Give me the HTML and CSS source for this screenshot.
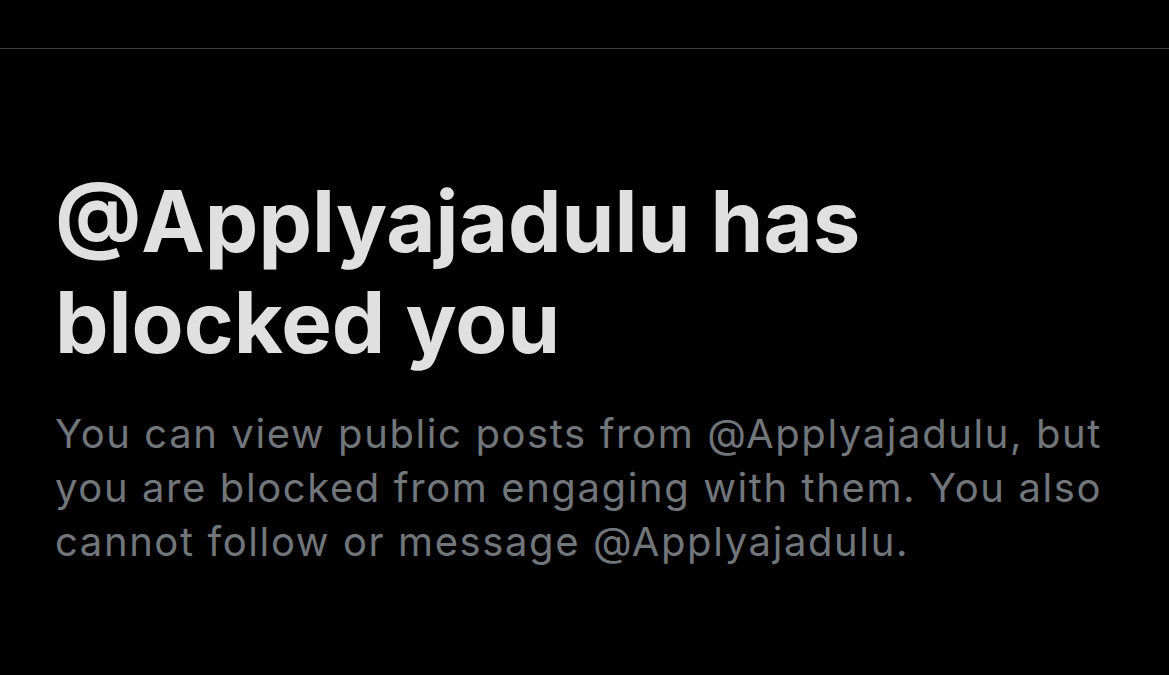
FILE: index.html
```html
<!DOCTYPE html>
<html lang="en">
<head>
  <meta charset="UTF-8" />
  <meta name="viewport" content="width=device-width, initial-scale=1.0"/>
  <title>Blocked</title>
  <link rel="stylesheet" href="styles.css">
</head>
<body>
  <div class="top-bar"></div>
  <div class="blocked">
    <h1 class="blocked-title">@Applyajadulu has blocked you</h1>
    <p class="blocked-text">You can view public posts from @Applyajadulu, but you are blocked from engaging with them. You also cannot follow or message @Applyajadulu.</p>
  </div>
</body>
</html>
```

FILE: styles.css
```css
html, body {
  margin: 0;
  background: #000;
}
body {
  font-family: Inter, 'Noto Sans', sans-serif;
  overflow: hidden;
}
.top-bar {
  height: 48px;
  border-bottom: 1px solid #3a3a3a;
}
.blocked {
  padding: 122px 40px 0 55px;
}
.blocked-title {
  margin: 0;
  font-size: 85px;
  font-weight: 700;
  line-height: 101px;
  color: #e0e0e0;
  max-width: 900px;
}
.blocked-text {
  margin: 34px 0 0;
  font-size: 40px;
  line-height: 54px;
  letter-spacing: 1.6px;
  color: #71767b;
  max-width: 1075px;
}
```
